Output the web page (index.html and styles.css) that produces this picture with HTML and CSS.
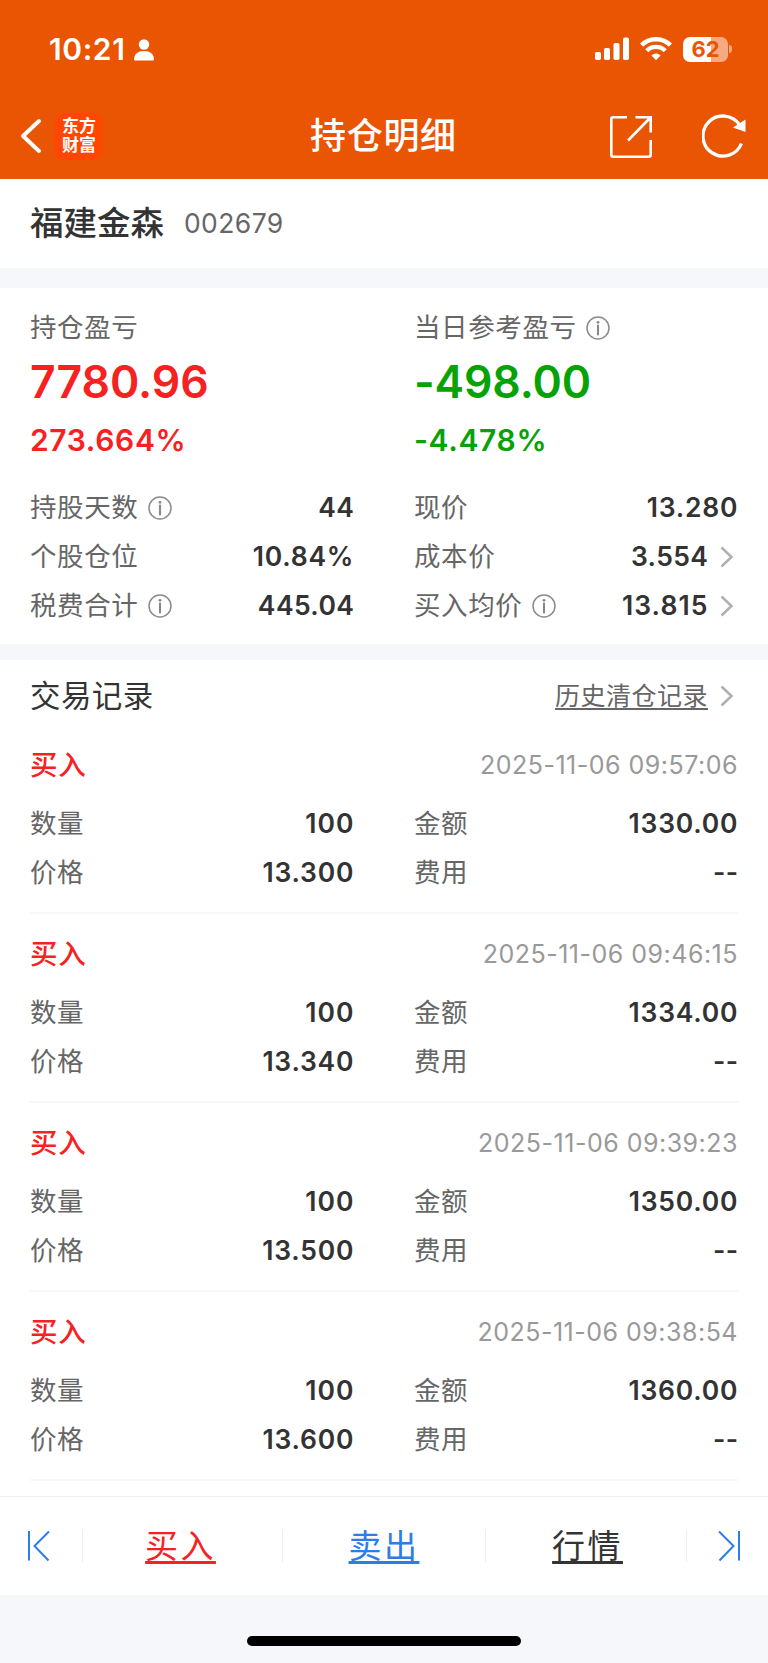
FILE: index.html
```html
<!DOCTYPE html>
<html lang="zh-CN">
<head>
<meta charset="utf-8">
<title>持仓明细</title>
<link rel="stylesheet" href="styles.css">
</head>
<body>
<svg class="sprite" width="0" height="0" aria-hidden="true">
  <symbol id="info" viewBox="0 0 24 24">
    <circle cx="12" cy="12" r="11" fill="none" stroke="#8c8c8c" stroke-width="1.5"/>
    <circle cx="12" cy="6.3" r="1.4" fill="#888"/>
    <path d="M12 9.6V18.4" stroke="#888" stroke-width="2.1" stroke-linecap="round"/>
  </symbol>
  <symbol id="more" viewBox="0 0 14 22">
    <path d="M1.500 1.500L11.500 11L1.500 20.500" fill="none" stroke="#b0b0b0" stroke-width="2.500"/>
  </symbol>
</svg>
<header class="header">
  <div class="status">
    <span class="clock">10:21</span>
    <svg class="person" width="20" height="22" viewBox="0 0 20 22" fill="#fff"><circle cx="10" cy="5.500" r="5.200"/><path d="M0 20.200C0 15.500 4 12 10 12S20 15.500 20 20.200C20 21.200 19.500 21.500 18.500 21.500H1.500C.5 21.500 0 21.200 0 20.200Z"/></svg>
    <svg class="signal" width="34" height="24" viewBox="0 0 34 24" fill="#fff"><rect x="0" y="15" width="6" height="8" rx="1.700"/><rect x="9" y="11" width="6" height="12" rx="1.700"/><rect x="18.500" y="6" width="6" height="17" rx="1.700"/><rect x="28" y="0.500" width="6" height="22.500" rx="1.700"/></svg>
    <svg class="wifi" width="32" height="24" viewBox="0 0 32 24"><g fill="none" stroke="#fff" stroke-width="4.400"><path d="M1.600 8.100A20.500 20.500 0 0 1 30.400 8.100"/><path d="M6.800 13.700A13 13 0 0 1 25.200 13.700"/></g><path d="M11.400 18.400A6.600 6.600 0 0 1 20.600 18.400L16 23.300Z" fill="#fff"/></svg>
    <div class="battery"><span>62</span></div>
    <i class="battery-tip"></i>
  </div>
  <div class="nav">
    <svg class="back" width="22" height="36" viewBox="0 0 22 36"><path d="M19 3L3 18L19 33" fill="none" stroke="#fff" stroke-width="4" stroke-linecap="round" stroke-linejoin="round"/></svg>
    <div class="logo"><span>东方</span><span>财富</span></div>
    <h1 class="title">持仓明细</h1>
    <svg class="share" width="42" height="42" viewBox="0 0 42 42" fill="none" stroke="#fff" stroke-width="2.600"><path d="M17 1.300H3.300Q1.300 1.300 1.300 3.300V38.700Q1.300 40.700 3.300 40.700H38.700Q40.700 40.700 40.700 38.700V24"/><path d="M25.500 1.300H40.700V16.500M40 2L18 24.500"/></svg>
    <svg class="reload" width="45" height="44" viewBox="0 0 45 44"><path d="M39.500 29.500A20 20 0 1 1 37.500 10.800" fill="none" stroke="#fff" stroke-width="3.300"/><path d="M43.500 5.500V18L31 13.500Z" fill="#fff"/></svg>
  </div>
</header>
<main>
  <section class="stock"><h2 class="name">福建金森</h2><span class="code">002679</span></section>
  <section class="summary">
    <div class="cols">
      <div class="profit up"><p class="label">持仓盈亏</p><p class="big">7780.96</p><p class="pct">273.664%</p></div>
      <div class="profit down"><p class="label">当日参考盈亏<svg class="info"><use href="#info"/></svg></p><p class="big">-498.00</p><p class="pct">-4.478%</p></div>
    </div>
    <div class="cols">
      <dl class="fields">
        <div class="row"><dt class="label">持股天数<svg class="info"><use href="#info"/></svg></dt><dd class="value">44</dd></div>
        <div class="row"><dt class="label">个股仓位</dt><dd class="value wide">10.84%</dd></div>
        <div class="row"><dt class="label">税费合计<svg class="info"><use href="#info"/></svg></dt><dd class="value">445.04</dd></div>
      </dl>
      <dl class="fields">
        <div class="row"><dt class="label">现价</dt><dd class="value wide">13.280</dd></div>
        <div class="row"><dt class="label">成本价</dt><dd class="value">3.554</dd><svg class="more"><use href="#more"/></svg></div>
        <div class="row"><dt class="label">买入均价<svg class="info"><use href="#info"/></svg></dt><dd class="value wider">13.815</dd><svg class="more"><use href="#more"/></svg></div>
      </dl>
    </div>
  </section>
  <section class="records">
    <div class="records-head"><h3 class="records-title">交易记录</h3><a class="history">历史清仓记录</a><svg class="more"><use href="#more"/></svg></div>
    <article class="record">
      <div class="record-head"><b class="side">买入</b><time class="time">2025-11-06 09:57:06</time></div>
      <div class="cols">
        <dl class="fields"><div class="row"><dt class="label">数量</dt><dd class="value wider">100</dd></div><div class="row"><dt class="label">价格</dt><dd class="value wide">13.300</dd></div></dl>
        <dl class="fields"><div class="row"><dt class="label">金额</dt><dd class="value wide">1330.00</dd></div><div class="row"><dt class="label">费用</dt><dd class="value dash">--</dd></div></dl>
      </div>
    </article>
    <article class="record">
      <div class="record-head"><b class="side">买入</b><time class="time">2025-11-06 09:46:15</time></div>
      <div class="cols">
        <dl class="fields"><div class="row"><dt class="label">数量</dt><dd class="value wider">100</dd></div><div class="row"><dt class="label">价格</dt><dd class="value wide">13.340</dd></div></dl>
        <dl class="fields"><div class="row"><dt class="label">金额</dt><dd class="value wide">1334.00</dd></div><div class="row"><dt class="label">费用</dt><dd class="value dash">--</dd></div></dl>
      </div>
    </article>
    <article class="record">
      <div class="record-head"><b class="side">买入</b><time class="time">2025-11-06 09:39:23</time></div>
      <div class="cols">
        <dl class="fields"><div class="row"><dt class="label">数量</dt><dd class="value wider">100</dd></div><div class="row"><dt class="label">价格</dt><dd class="value wide">13.500</dd></div></dl>
        <dl class="fields"><div class="row"><dt class="label">金额</dt><dd class="value wide">1350.00</dd></div><div class="row"><dt class="label">费用</dt><dd class="value dash">--</dd></div></dl>
      </div>
    </article>
    <article class="record">
      <div class="record-head"><b class="side">买入</b><time class="time">2025-11-06 09:38:54</time></div>
      <div class="cols">
        <dl class="fields"><div class="row"><dt class="label">数量</dt><dd class="value wider">100</dd></div><div class="row"><dt class="label">价格</dt><dd class="value wide">13.600</dd></div></dl>
        <dl class="fields"><div class="row"><dt class="label">金额</dt><dd class="value wide">1360.00</dd></div><div class="row"><dt class="label">费用</dt><dd class="value dash">--</dd></div></dl>
      </div>
    </article>
  </section>
</main>
<nav class="tabs">
  <div class="tab edge"><svg class="first" width="24" height="32" viewBox="0 0 24 32" fill="none" stroke="#2b7de9" stroke-width="2"><path d="M2 1V30.500M22 1.500L7.500 16L21.500 30.500"/></svg></div>
  <div class="tab"><a class="buy">买入</a></div>
  <div class="tab"><a class="sell">卖出</a></div>
  <div class="tab"><a class="quote">行情</a></div>
  <div class="tab edge"><svg class="last" width="24" height="32" viewBox="0 0 24 32" fill="none" stroke="#2b7de9" stroke-width="2"><path d="M22 1V30.500M2 1.500L16.500 16L2.500 30.500"/></svg></div>
</nav>
<footer class="home"><i></i></footer>
</body>
</html>
```
FILE: styles.css
```css
* { box-sizing: border-box; margin: 0; padding: 0; }
body {
  width: 768px;
  height: 1663px;
  display: flex;
  flex-direction: column;
  background: #f6f7fa;
  color: #333;
  font-family: Inter, "Noto Sans CJK SC", sans-serif;
  font-size: 27px;
  overflow: hidden;
}
svg { display: block; flex: none; }
.sprite { position: absolute; }

.header { height: 179px; background: #ea5504; color: #fff; }
.status { display: flex; align-items: center; height: 98px; padding-left: 49px; }
.clock { width: 85px; font-size: 30px; font-weight: 600; line-height: 40px; letter-spacing: .6px; }
.person { margin-top: 1px; }
.signal { margin-left: 441px; }
.wifi { margin-left: 11px; }
.battery {
  width: 45px;
  height: 25px;
  margin-left: 11px;
  border-radius: 7px;
  background: linear-gradient(90deg, #fff 62%, #f6aa82 62%);
  color: #ea5504;
  font-size: 22px;
  font-weight: 700;
  line-height: 25px;
  text-align: center;
}
.battery-tip { width: 3px; height: 8px; margin-left: 1px; border-radius: 0 4px 4px 0; background: #f6aa82; }
.nav { display: flex; align-items: center; height: 76px; padding-left: 20px; }
.logo {
  width: 47px;
  height: 47px;
  margin-left: 13px;
  padding: 4px 0 0 7px;
  border-radius: 9px;
  background: #ff4602;
  font-size: 17px;
  font-weight: 700;
  line-height: 19.500px;
}
.logo span { display: block; }
.title { width: 147px; margin-left: 208px; font-size: 36px; font-weight: 500; line-height: 48px; letter-spacing: .7px; white-space: nowrap; }
.share { margin: 2px 0 0 153px; }
.reload { margin-left: 50px; }

.stock { display: flex; height: 89px; padding: 20px 30px; background: #fff; line-height: 48px; }
.name { font-size: 33.5px; font-weight: 500; }
.code { margin-left: 20px; color: #666; font-size: 26.5px; letter-spacing: .4px; }

.summary { height: 356px; margin-top: 20px; padding: 15px 30px 0; background: #fff; }
.cols { display: grid; grid-template-columns: 324px 324px; column-gap: 60px; }
.profit { height: 180px; }
.label { display: flex; align-items: center; color: #666; font-size: 26.5px; font-weight: 400; line-height: 49px; letter-spacing: .6px; white-space: nowrap; }
.profit .big { font-size: 44.500px; font-weight: 600; line-height: 61px; }
.profit .pct { font-size: 30px; font-weight: 600; line-height: 55px; letter-spacing: .65px; }
.up { color: #f62222; }
.down { color: #06a206; }
.down .big { letter-spacing: -.15px; }
.info { width: 24px; height: 24px; margin-left: 9.500px; }
.row { display: flex; align-items: center; height: 49px; }
.row .value { margin: 0 -.4px 0 auto; font-size: 26.500px; font-weight: 600; line-height: 49px; letter-spacing: .4px; }
.row .wide { margin-right: -.2px; letter-spacing: .75px; }
.row .wider { margin-right: -.6px; letter-spacing: 1.100px; }
.more { width: 14px; height: 22px; margin: 0 4px 0 12px; }

.records { height: 836px; margin-top: 16px; padding: 0 30px; background: #fff; }
.records-head { display: flex; align-items: center; height: 72px; line-height: 72px; }
.records-title { font-size: 30.500px; font-weight: 400; letter-spacing: .4px; }
.history { margin-left: auto; color: #666; font-size: 25px; letter-spacing: .5px; text-decoration: underline; text-decoration-thickness: 2px; text-underline-offset: 3px; text-decoration-skip-ink: none; }
.records-head .more { margin: 0 4px 0 12px; }
.record { height: 189px; padding-top: 10px; border-bottom: 2px solid #f7f7f8; }
.record:nth-child(2) { height: 182px; padding-top: 3px; }
.record-head { display: flex; align-items: center; justify-content: space-between; height: 60px; margin-bottom: 4px; line-height: 60px; }
.side { color: #f62222; font-size: 27.500px; font-weight: 500; letter-spacing: .8px; }
.time { color: #999; font-size: 25px; letter-spacing: .5px; }

.tabs { display: grid; grid-template-columns: 83px 200px 203px 201px 81px; height: 99px; border-top: 1px solid #eee; background: #fff; }
.tab { display: flex; align-items: center; justify-content: center; position: relative; }
.tab + .tab::before { content: ""; position: absolute; left: -1px; top: 32px; width: 1px; height: 33px; background: #eee; }
.tab a { font-size: 33px; line-height: 48px; letter-spacing: 2.400px; text-decoration: underline; text-decoration-thickness: 3px; text-underline-offset: 3px; text-decoration-skip-ink: none; }
.tab .buy { margin-right: 5px; color: #f62222; }
.tab .sell { margin-right: 1px; color: #2b7de9; }
.tab .quote { margin-left: 2px; }
.first { margin-right: 6px; }
.last { margin-left: 2px; }
.home { display: flex; justify-content: center; padding-top: 41px; }
.home i { width: 274px; height: 10px; border-radius: 5px; background: #000; }
```
